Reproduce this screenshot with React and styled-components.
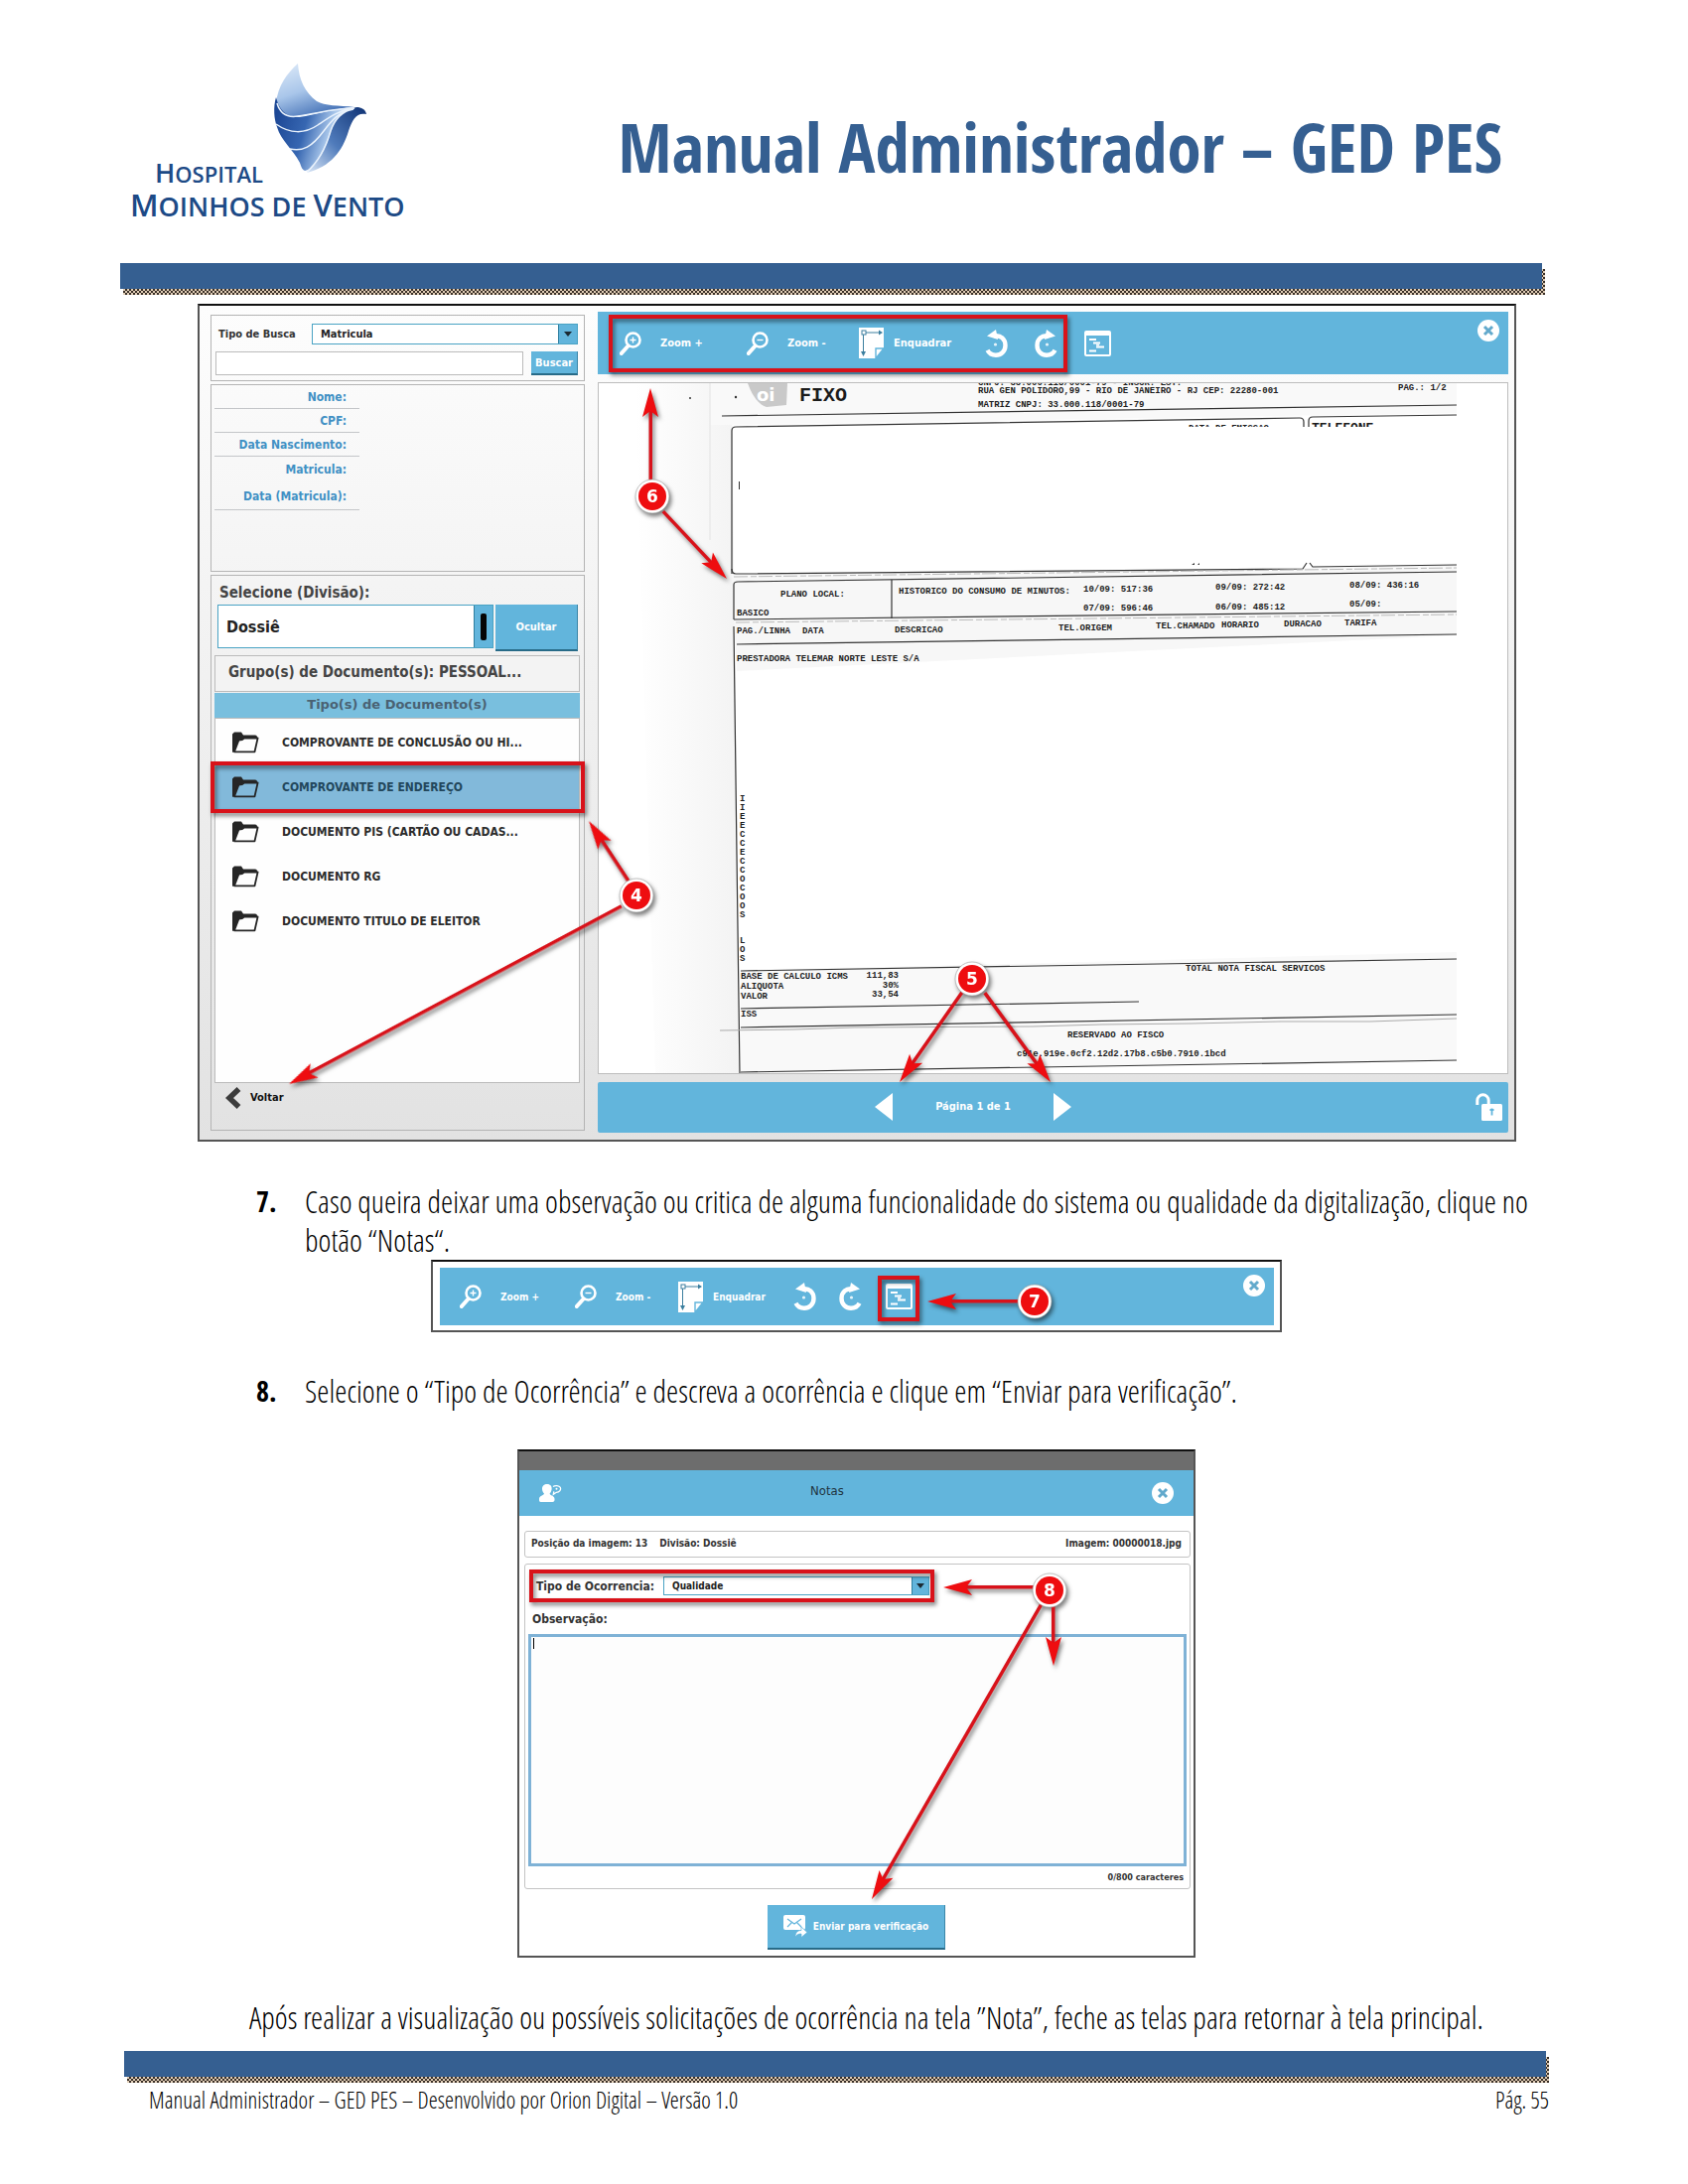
import React from "react";
import styled, { createGlobalStyle } from "styled-components";

const HEADING = '"Open Sans Condensed", "Open Sans", sans-serif';
const BODY = '"Open Sans Condensed Light", "Roboto Condensed", "Open Sans", sans-serif';
const UI = '"DejaVu Sans Condensed", "DejaVu Sans", sans-serif';
const UI_WIDE = '"DejaVu Sans", sans-serif';
const MONO = '"Liberation Mono", monospace';
const BLUE = "#62b5dc";
const NAVY = "#355f91";
const RED = "#d8121a";

const GlobalStyle = createGlobalStyle`
  *, *::before, *::after { box-sizing: border-box; }
  body { margin: 0; background: #fff; color: #000; font-family: ${BODY}; }
  button, input, select, textarea { font: inherit; color: inherit; margin: 0; padding: 0; border: 0; border-radius: 0; }
  button { background: none; cursor: pointer; }
  h1, h2, p, ol, ul, dl, dd, figure { margin: 0; padding: 0; }
  ol, ul { list-style: none; }
`;

const Page = styled.div`
  display: flex;
  flex-direction: column;
  padding: 0 140px 60px 121px;
`;

const Header = styled.header`
  display: flex;
  justify-content: space-between;
  height: 265px;
  padding: 62px 47px 0 10px;
`;

const Logo = styled.div`
  position: relative;
  width: 280px;
  height: 164px;
  padding-top: 96px;
  color: #1d4a86;
  font-family: "Open Sans", sans-serif;
  line-height: 31px;
`;

const LogoMark = styled.svg`
  position: absolute;
  left: 144px;
  top: 0;
`;

const LogoLine = styled.div`
  font-size: ${(p) => p.$size}px;
  padding-left: ${(p) => p.$indent}px;
  font-weight: 600;
  white-space: nowrap;
  & > b { font-size: ${(p) => p.$cap}px; font-weight: inherit; }
`;

const Title = styled.h1`
  padding-top: 42px;
  color: ${NAVY};
  font-family: ${HEADING};
  font-size: 69px;
  line-height: 86px;
  font-weight: 700;
  white-space: nowrap;
`;

const RuleWrap = styled.div`
  position: relative;
  margin-left: ${(p) => p.$start}px;
  margin-right: ${(p) => p.$end}px;
  padding: 0 3px 6px 0;
  &::before {
    content: "";
    position: absolute;
    inset: 6px 0 0 3px;
    background: repeating-conic-gradient(#3a3028 0 25%, #e0cdb6 0 50%) 0 0 / 4px 4px;
  }
`;

const RuleBar = styled.div`
  position: relative;
  height: 26px;
  background: ${NAVY};
`;

const Frame = styled.figure`
  position: relative;
  border: 2px solid #555;
  border-top-color: #111;
  background: #fff;
`;

const Overlay = styled.svg`
  position: absolute;
  inset: -2px;
  pointer-events: none;
  overflow: visible;
`;

const ViewerFrame = styled(Frame)`
  display: grid;
  grid-template-columns: 377px 1fr;
  column-gap: 13px;
  margin: 9px 33px 0 78px;
  padding: 6px 6px 7px 11px;
  background: linear-gradient(#fdfdfd, #e2e2e2);
  font-family: ${UI};
  font-weight: 700;
`;

const Column = styled.div`
  display: flex;
  flex-direction: column;
  gap: ${(p) => p.$gap}px;
  padding: ${(p) => p.$pad};
  min-width: 0;
`;

const Panel = styled.section`
  border: 1px solid #b4b4b4;
  padding: ${(p) => p.$pad || "0"};
  flex: ${(p) => (p.$grow ? "1" : "none")};
  display: flex;
  flex-direction: column;
`;

const SearchRow = styled.div`
  display: flex;
  align-items: center;
  gap: 8px;
  margin-top: ${(p) => p.$top || 0}px;
`;

const SearchLabel = styled.label`
  width: 89px;
  padding-left: 3px;
  color: #333;
  font-size: 11px;
  white-space: nowrap;
`;

const SelectBox = styled.div`
  position: relative;
  flex: 1;
  display: flex;
  height: ${(p) => p.$height}px;
  border: 1px solid #4aa3c4;
  background: #fff;
  & > select {
    flex: 1;
    appearance: none;
    background: transparent;
    outline: none;
    padding-left: 8px;
    color: #222;
    font-size: ${(p) => p.$size}px;
  }
`;

const SelectArrow = styled.span`
  display: grid;
  place-items: center;
  width: ${(p) => p.$width || 19}px;
  border-left: 1px solid #2f7fa0;
  background: ${BLUE};
`;

const Caret = styled.i`
  border: 4px solid transparent;
  border-top: 5px solid #1b2a33;
  border-bottom: 0;
`;

const ThickBar = styled.i`
  width: 6px;
  height: 27px;
  border-radius: 2px;
  background: #050505;
`;

const SearchInput = styled.input`
  flex: 1;
  min-width: 0;
  height: 24px;
  border: 1px solid #bbb;
  background: #fff;
`;

const BlueButton = styled.button`
  width: ${(p) => p.$width}px;
  height: ${(p) => p.$height}px;
  display: flex;
  align-items: center;
  justify-content: center;
  gap: 6px;
  border-right: 1px solid #3c87a8;
  border-bottom: 2px solid #286b88;
  background: ${BLUE};
  color: #fff;
  font-size: ${(p) => p.$size || 11}px;
  font-weight: 700;
  white-space: nowrap;
`;

const Fields = styled.dl`
  width: 149px;
  padding-left: 3px;
`;

const Field = styled.dt`
  height: ${(p) => p.$height}px;
  line-height: ${(p) => p.$height}px;
  padding-right: 13px;
  border-bottom: ${(p) => (p.$line ? "1px solid #c4c6c9" : "0")};
  color: #4090c4;
  font-size: 12px;
  text-align: right;
`;

const FieldPanel = styled(Panel)`
  height: 189px;
`;

const DivisionLabel = styled.label`
  display: block;
  padding: 0 5px;
  color: #444;
  font-size: 15px;
  line-height: 18px;
`;

const DivisionRow = styled.div`
  display: flex;
  gap: 2px;
  padding: 3px 2px 0 3px;
`;

const GroupBox = styled.div`
  height: 37px;
  margin-top: 4px;
  padding-left: 13px;
  border: 1px solid #bbb;
  color: #444;
  font-size: 15px;
  line-height: 32px;
  background: #f3f3f3;
  white-space: nowrap;
`;

const ListTitle = styled.h2`
  height: 25px;
  margin-top: 1px;
  background: #79bfde;
  color: #4a6273;
  font-family: ${UI_WIDE};
  font-size: 13px;
  line-height: 24px;
  text-align: center;
`;

const DocList = styled.ul`
  flex: 1;
  padding: 1px 0;
  border: 1px solid #bbb;
  background: #fefefe;
`;

const DocItem = styled.button`
  display: flex;
  align-items: center;
  gap: 23px;
  width: 100%;
  height: 45px;
  padding-left: 17px;
  background: ${(p) => (p.$active ? "#82b9da" : "transparent")};
  color: ${(p) => (p.$active ? "#22475c" : "#2c2c2c")};
  font-size: 12px;
  font-weight: 700;
  white-space: nowrap;
`;

const BackButton = styled.button`
  display: flex;
  align-items: center;
  gap: 9px;
  height: 47px;
  padding: 0 0 18px 11px;
  color: #111;
  font-size: 11px;
  font-weight: 700;
`;

const ToolGrid = styled.div`
  display: grid;
  grid-template-columns: ${(p) => p.$cols};
  align-items: center;
  height: ${(p) => p.$height}px;
  padding: 0 9px 0 ${(p) => p.$left}px;
  background: ${BLUE};
  color: #fff;
  font-family: ${UI};
  font-size: ${(p) => p.$size}px;
`;

const Tool = styled.button`
  display: flex;
  align-items: center;
  gap: ${(p) => p.$gap || 0}px;
  font-weight: 700;
  white-space: nowrap;
`;

const CloseTool = styled.button`
  align-self: start;
  justify-self: end;
  display: flex;
  margin-top: ${(p) => p.$top}px;
`;

const ScanBox = styled.div`
  height: 697px;
  border: 1px solid #bdbdbd;
  background: #fff;
  overflow: hidden;
  & > svg { display: block; width: 100%; height: 100%; }
`;

const Pager = styled.nav`
  display: grid;
  grid-template-columns: 279px 198px 1fr;
  align-items: center;
  height: 51px;
  padding: 0 6px 2px 0;
  border-radius: 2px;
  background: ${BLUE};
  color: #fff;
  font-size: 11px;
`;

const PagerCenter = styled.div`
  grid-column: 2;
  display: flex;
  align-items: center;
  justify-content: space-between;
  & > button { display: flex; }
`;

const LockButton = styled.button`
  justify-self: end;
  display: flex;
`;

const Step = styled.li`
  display: grid;
  grid-template-columns: 49px 1fr;
  margin-top: ${(p) => p.$top}px;
  padding-left: 137px;
  font-size: 31px;
  line-height: 39px;
  & > b { font-family: ${HEADING}; font-size: 28px; font-weight: 700; }
`;

const StripFrame = styled(Frame)`
  margin: 0 269px 0 313px;
  padding: 6px 6px 5px 7px;
  font-weight: 700;
`;

const NotesFrame = styled(Frame)`
  margin: 39px 356px 0 400px;
  height: 512px;
  font-family: ${UI};
  font-weight: 700;
  color: #333;
`;

const NotesShade = styled.div`
  height: 19px;
  background: #6d6d6d;
`;

const NotesHeader = styled.header`
  display: grid;
  grid-template-columns: 273px auto 1fr;
  align-items: center;
  height: 46px;
  padding: 0 20px 0 20px;
  background: ${BLUE};
  & > h2 { padding-bottom: 6px; font-size: 13px; font-weight: 400; color: #1f3440; }
  & > button { justify-self: end; display: flex; }
`;

const InfoBar = styled.div`
  display: flex;
  gap: 12px;
  height: 27px;
  margin: 15px 3px 0 5px;
  padding: 0 8px 0 6px;
  border: 1px solid #c4c4c4;
  border-radius: 3px;
  font-size: 10px;
  line-height: 23px;
  & > :last-child { margin-left: auto; }
`;

const NotesPanel = styled.form`
  margin: 6px 3px 0 5px;
  height: 328px;
  padding: 12px 3px 0 3px;
  border: 1px solid #c4c4c4;
  border-radius: 3px;
`;

const KindRow = styled.div`
  display: flex;
  align-items: center;
  width: 404px;
  padding-left: 8px;
  & > label { width: 128px; font-size: 12px; white-space: nowrap; }
`;

const ObsLabel = styled.label`
  display: block;
  margin: 15px 0 6px 4px;
  font-size: 12px;
  line-height: 18px;
`;

const ObsBox = styled.div`
  position: relative;
  & > textarea {
    display: block;
    width: 100%;
    height: 234px;
    border: 3px solid #7fb2d6;
    background: #fdfdfd;
    resize: none;
    outline: none;
    padding: 3px;
    font-size: 11px;
  }
`;

const TextCursor = styled.i`
  position: absolute;
  left: 5px;
  top: 4px;
  width: 1px;
  height: 11px;
  background: #000;
`;

const Counter = styled.p`
  padding-right: 3px;
  font-size: 9px;
  line-height: 22px;
  text-align: right;
`;

const SendRow = styled.div`
  display: flex;
  justify-content: center;
  margin-top: 16px;
`;

const Closing = styled.p`
  margin: 41px 0 14px 130px;
  font-size: 31px;
  line-height: 39px;
  white-space: nowrap;
`;

const Footer = styled.footer`
  display: flex;
  justify-content: space-between;
  padding: 3px 0 0 29px;
  font-size: 23px;
  line-height: 28px;
`;

/* ---------- icons ---------- */

const Magnifier = ({ minus }) => (
  <svg width="22" height="24" viewBox="0 0 22 24" fill="none" stroke="#fff">
    <circle cx="13.5" cy="8.5" r="7" strokeWidth="2.6" />
    <path d="M8.5 14.5 1.8 22" strokeWidth="4" strokeLinecap="round" />
    <path d={minus ? "M10.5 8.5h6" : "M10.5 8.5h6M13.5 5.5v6"} strokeWidth="1.4" />
  </svg>
);

const FitPage = () => (
  <svg width="25" height="31" viewBox="0 0 25 31">
    <path d="M0 0h25v20l-8 11H0z" fill="#fff" />
    <path d="M17 31v-10h8z" fill="#fff" stroke="#62b5dc" strokeWidth="1.4" />
    <path d="M7 5h14M4.500 7v18" stroke="#3c7f9f" strokeWidth="1" />
    <path d="M20 2.500 24 5l-4 2.500zM2 24l2.500 5 2.500-5z" fill="#3c7f9f" />
    <rect x="3" y="3" width="4" height="4" fill="#fff" stroke="#3c7f9f" />
  </svg>
);

const Rotate = ({ right }) => (
  <svg width="23" height="28" viewBox="0 0 23 28">
    <g transform={right ? "translate(23 0) scale(-1 1)" : undefined}>
      <path d="M9 6.500C16 5 20.500 10 20.500 16c0 6-4.500 9.700-9.500 9.700-4 0-7-2-8.500-5" fill="none" stroke="#fff" strokeWidth="4.400" />
      <path d="M2 6.500 11 0l2 10z" fill="#fff" />
      <circle cx="10.500" cy="15" r="1.600" fill="#fff" opacity=".85" />
    </g>
  </svg>
);

const NotesIcon = () => (
  <svg width="27" height="26" viewBox="0 0 27 26" fill="none" stroke="#fff">
    <rect x="1" y="1" width="25" height="24" rx="1" strokeWidth="2" />
    <path d="M1 3h25" strokeWidth="4" />
    <path d="M5 9h7M9 12.500h7M12 16.500h8M5 20.500h7" strokeWidth="2" />
    <path d="M12 14.500h3" strokeWidth="1.500" />
  </svg>
);

const CloseIcon = () => (
  <svg width="22" height="22" viewBox="0 0 22 22">
    <circle cx="11" cy="11" r="11" fill="#fff" />
    <path d="m7 7 8 8m0-8-8 8" stroke="#62a9cc" strokeWidth="3" />
  </svg>
);

const Folder = ({ fill }) => (
  <svg width="27" height="22" viewBox="0 0 27 22">
    <path d="M0 21V2.500L2 .500h7l2 3h12q2 0 2 2v3z" fill="#262626" />
    <path d="M2 20.300 6.500 8.500 10 8l2-1.500h13.600L22.500 20.300z" fill={fill} stroke="#262626" strokeWidth="1.800" strokeLinejoin="round" />
  </svg>
);

const BackChevron = () => (
  <svg width="16" height="22" viewBox="0 0 16 22" fill="none" stroke="#3c3c3c" strokeWidth="5.500">
    <path d="M13.500 2 4 11l9.500 9" />
  </svg>
);

const Triangle = ({ right }) => (
  <svg width="18" height="28" viewBox="0 0 18 28">
    <path d={right ? "M0 0 18 14 0 28z" : "M18 0 0 14l18 14z"} fill="#fff" />
  </svg>
);

const OpenLock = () => (
  <svg width="27" height="28" viewBox="0 0 27 28">
    <path d="M1.800 12V7.500a5.700 5.700 0 0 1 11.400 0V11" fill="none" stroke="#fff" strokeWidth="3" />
    <rect x="6" y="11" width="21" height="17" rx="1.500" fill="#fff" />
    <path d="M14.500 17h4M16.500 15.500v7" stroke="#62b5dc" strokeWidth="1.800" />
  </svg>
);

const UserTalk = () => (
  <svg width="23" height="18" viewBox="0 0 23 18">
    <path d="M8 0c3.500 0 5 2.300 4.600 5.200-.3 2-1 3.300-2 4.200.3 2 4.900 2 4.900 5.400V16c0 1-1 2-2 2h-12c-1 0-1.500-1-1.500-2v-1.200c0-3.400 4.500-3.400 5-5.400C3.700 8.300 3 6.700 3 4.800 3 2 5 0 8 0z" fill="#fff" />
    <path d="M14 2.500c2-1.500 6-1.200 7.300.8 1.200 2.300-.8 5-4 5l-3 2 .5-3" fill="none" stroke="#fff" strokeWidth="1.300" />
    <circle cx="17.500" cy="4.800" r="1" fill="#fff" />
  </svg>
);

const MailSend = () => (
  <svg width="24" height="23" viewBox="0 0 24 23">
    <rect x="0" y="0" width="22" height="15" rx="2" fill="#fff" />
    <path d="m4 4 7 5 7-5M4 12l4.500-4.500M18 12l-4.500-4.500" fill="none" stroke="#62b5dc" strokeWidth="1.200" />
    <path d="M12 22c0-5 3-6.500 6-6.500V12l6 5.500-6 5V19c-2.500 0-4.500.5-6 3z" fill="#fff" stroke="#62b5dc" strokeWidth=".7" />
  </svg>
);

const Wing = () => (
  <LogoMark width="96" height="114" viewBox="0 0 96 114" role="img" aria-label="Hospital Moinhos de Vento">
    <defs>
      <linearGradient id="wingTop" x1=".1" y1="0" x2=".6" y2="1">
        <stop offset="0" stopColor="#dce9f8" />
        <stop offset=".5" stopColor="#a9c6ea" />
        <stop offset="1" stopColor="#3f6db4" />
      </linearGradient>
      <linearGradient id="wingMid" x1="0" y1=".3" x2=".8" y2=".5">
        <stop offset="0" stopColor="#1c4795" />
        <stop offset=".45" stopColor="#3767b2" />
        <stop offset=".8" stopColor="#a8c6ea" />
        <stop offset="1" stopColor="#e4eefa" />
      </linearGradient>
      <linearGradient id="wingTail" x1="1" y1="0" x2="0" y2="1">
        <stop offset="0" stopColor="#0f3274" />
        <stop offset=".55" stopColor="#4f7bbb" />
        <stop offset="1" stopColor="#dbe8f8" />
      </linearGradient>
    </defs>
    <path d="M25 2C14 12 5 24 3 42c3 10 9 15 21 13 21-3 40-8 58-9-16-2-30-1-38-6C32 31 26 18 25 2z" fill="url(#wingTop)" />
    <path d="M3 36c-3 10-2 22 1 30 4 14 16 22 23 36 2 6 3 7 5 8 18-4 28-40 56-64-26 0-44 8-62 10C12 56 6 48 3 36z" fill="url(#wingMid)" />
    <path d="M84 46c5 0 9 2 10 7-10-2-14 5-18 17-6 20-18 36-42 42 14-12 20-28 24-42 4-12 12-21 26-24z" fill="url(#wingTail)" />
    <path d="M4 42c3 10 9 15 21 13 20-3 38-8 55-8M3 63c14 10 29 10 42 1 12-8 20-14 35-17M17 88c13 3 22-2 34-18 9-12 15-19 30-22M34 111c14-12 20-27 24-41 4-12 12-20 24-23" fill="none" stroke="#e9f2fc" strokeWidth="1.500" />
  </LogoMark>
);

/* ---------- callouts ---------- */

const Arrow = ({ from, to }) => {
  const dx = to[0] - from[0];
  const dy = to[1] - from[1];
  const len = Math.hypot(dx, dy);
  const angle = (Math.atan2(dy, dx) * 180) / Math.PI;
  return (
    <g transform={`translate(${from[0]} ${from[1]}) rotate(${angle})`} fill="#ee0d10">
      <rect x="0" y="-1.500" width={len - 22} height="3.500" fill={RED} />
      <path d={`M${len} 0 ${len - 29} -8 ${len - 23} 0 ${len - 29} 8z`} />
    </g>
  );
};

const Badge = ({ x, y, n }) => (
  <g>
    <circle cx={x} cy={y} r="17" fill="#fff" stroke="#999" strokeWidth=".6" />
    <circle cx={x} cy={y} r="14" fill="#ee0d10" />
    <text x={x} y={y + 6} textAnchor="middle" fontFamily='"DejaVu Sans", sans-serif' fontWeight="700" fontSize="17" fill="#fff">
      {n}
    </text>
  </g>
);

const Callouts = ({ box, boxes, arrows, badge }) => (
  <Overlay viewBox={box.join(" ")} width={box[2]} height={box[3]}>
    <g style={{ filter: "drop-shadow(2px 3px 2px rgba(0,0,0,.5))" }}>
      {boxes.map(([x, y, w, h]) => (
        <rect key={x} x={x + 2} y={y + 2} width={w - 4} height={h - 4} fill="none" stroke={RED} strokeWidth="4" />
      ))}
      {arrows.map((a, i) => (
        <Arrow key={i} from={a[0]} to={a[1]} />
      ))}
      {badge.map(([x, y, n]) => (
        <Badge key={n} x={x} y={y} n={n} />
      ))}
    </g>
  </Overlay>
);

/* ---------- scanned bill ---------- */

const SCAN_LINES = [
  "M727 418 1467 407",
  "M737 577V433q0-4 4-4L1309 420q4 0 4 4v5",
  "M1318 429v-6q0-4 4-4L1467 417",
  "M737 572q0 5 4 5L1312 572l4-6M1319 566l3 4L1467 568",
  "M739 623V588q0-3 4-3L1467 575",
  "M898 583v39",
  "M739 623 1467 615",
  "M742 648 1467 638",
  "M739 630 742 860 745 1081",
  "M746 977 1467 965",
  "M746 1015 1147 1008",
  "M746 1034 1467 1021",
  "M746 1079 1467 1067",
];

const SCAN_TEXT = [
  [985, 395, "RUA GEN POLIDORO,99 - RIO DE JANEIRO - RJ CEP: 22280-001"],
  [985, 409, "MATRIZ CNPJ: 33.000.118/0001-79"],
  [1408, 392, "PAG.: 1/2"],
  [786, 600, "PLANO LOCAL:"],
  [742, 619, "BASICO"],
  [905, 597, "HISTORICO DO CONSUMO DE MINUTOS:"],
  [1091, 595, "10/09: 517:36"],
  [1091, 614, "07/09: 596:46"],
  [1224, 593, "09/09: 272:42"],
  [1224, 613, "06/09: 485:12"],
  [1359, 591, "08/09: 436:16"],
  [1359, 610, "05/09:"],
  [742, 637, "PAG./LINHA"],
  [808, 637, "DATA"],
  [901, 636, "DESCRICAO"],
  [1066, 634, "TEL.ORIGEM"],
  [1164, 632, "TEL.CHAMADO"],
  [1230, 631, "HORARIO"],
  [1293, 630, "DURACAO"],
  [1354, 629, "TARIFA"],
  [742, 665, "PRESTADORA TELEMAR NORTE LESTE S/A"],
  [746, 985, "BASE DE CALCULO ICMS"],
  [746, 995, "ALIQUOTA"],
  [746, 1005, "VALOR"],
  [746, 1023, "ISS"],
  [1194, 977, "TOTAL NOTA FISCAL SERVICOS"],
  [1075, 1044, "RESERVADO AO FISCO"],
  [1024, 1063, "c91e.919e.0cf2.12d2.17b8.c5b0.7910.1bcd"],
];

const SCAN_AMOUNTS = [
  [984, "111,83"],
  [994, "30%"],
  [1003, "33,54"],
];

const SIDE_LETTERS = "IIEECCECCOCOOS";

const Scan = () => (
  <svg viewBox="603 385 915 695" preserveAspectRatio="xMinYMin meet">
    <defs>
      <linearGradient id="paper" x1="0" x2="1" y1="0" y2="0">
        <stop offset="0" stopColor="#fff" />
        <stop offset="1" stopColor="#f3f3f3" />
      </linearGradient>
      <clipPath id="aboveCover"><rect x="603" y="385" width="915" height="44" /></clipPath>
    </defs>
    <path d="M640 385h97l8 696H660z" fill="url(#paper)" />
    <path d="M715 385h752v30l-730 12H715z" fill="#f9f9f9" />
    <path d="M737 578 1467 569v70L1200 652 742 675z" fill="#f7f7f7" />
    <path d="M746 977 1467 958v108L746 1080z" fill="#f9f9f9" />
    <path d="M715 385v158" stroke="#e2e2e2" />
    <path d="M753 385h40l-1 22-20 2q-12-4-19-24z" fill="#c9c9c9" />
    <text x="762" y="403" fontFamily='"DejaVu Sans", sans-serif' fontWeight="700" fontSize="18" fill="#fff">oi</text>
    <g fill="none" stroke="#333" strokeWidth="1.200">
      {SCAN_LINES.map((d) => (
        <path key={d} d={d} />
      ))}
    </g>
    <path d="M725 1037 800 1036 860 1034 1040 1033 1110 1031 1200 1030 1290 1028 1380 1028 1467 1025" fill="none" stroke="#aaa" />
    <path d="M739 580 1467 571M741 626 1467 618" stroke="#bbb" strokeDasharray="14 3 6 2" />
    <g fill="#333">
      <circle cx="695" cy="400" r="1" />
      <circle cx="741" cy="399" r="1.200" />
      <path d="M744 484h1v8h-1zM1200 568h3v-2zM1206 568h2v-2z" />
    </g>
    <g fontFamily={MONO} fill="#1c1c1c">
      <text x="805" y="403" fontSize="20">FIXO</text>
      <g fontSize="9" fontWeight="700">
        <text x="985" y="387">CNPJ: 33.000.118/0001-79 - INSCR. EST.</text>
        {SCAN_TEXT.map(([x, y, t]) => (
          <text key={t} x={x} y={y}>{t}</text>
        ))}
        {SCAN_AMOUNTS.map(([y, t]) => (
          <text key={t} x="905" y={y} textAnchor="end">{t}</text>
        ))}
        {SIDE_LETTERS.split("").map((c, i) => (
          <text key={i} x="745" y={806 + i * 9}>{c}</text>
        ))}
        {["L", "O", "S"].map((c, i) => (
          <text key={c} x="745" y={949 + i * 9}>{c}</text>
        ))}
      </g>
      <g clipPath="url(#aboveCover)" fontWeight="700">
        <text x="1197" y="433" fontSize="9">DATA DE EMISSAO</text>
        <text x="1321" y="434" fontSize="13">TELEFONE</text>
      </g>
    </g>
  </svg>
);

/* ---------- toolbar ---------- */

const ToolBar = ({ cols, height, left, closeTop, size }) => (
  <ToolGrid $cols={cols} $height={height} $left={left} $size={size}>
    <Tool $gap={19}><Magnifier />Zoom +</Tool>
    <Tool $gap={19}><Magnifier minus />Zoom -</Tool>
    <Tool $gap={10}><FitPage />Enquadrar</Tool>
    <Tool aria-label="Girar à esquerda"><Rotate /></Tool>
    <Tool aria-label="Girar à direita"><Rotate right /></Tool>
    <Tool aria-label="Notas"><NotesIcon /></Tool>
    <CloseTool aria-label="Fechar" $top={closeTop}><CloseIcon /></CloseTool>
  </ToolGrid>
);

const DOCS = [
  "COMPROVANTE DE CONCLUSÃO OU HI...",
  "COMPROVANTE DE ENDEREÇO",
  "DOCUMENTO PIS (CARTÃO OU CADAS...",
  "DOCUMENTO RG",
  "DOCUMENTO TITULO DE ELEITOR",
];

const FIELDS = [
  ["Nome:", 24, true],
  ["CPF:", 24, true],
  ["Data Nascimento:", 24, true],
  ["Matricula:", 26, false],
  ["Data (Matricula):", 28, true],
];

const Rule = ({ start = 0, end = 0 }) => (
  <RuleWrap $start={start} $end={end}><RuleBar /></RuleWrap>
);

export default function App() {
  return (
    <Page>
      <GlobalStyle />
      <Header>
        <Logo>
          <Wing />
          <LogoLine $size={22} $cap={27} $indent={25}><b>H</b>OSPITAL</LogoLine>
          <LogoLine $size={27} $cap={31} $indent={0}><b>M</b>OINHOS DE <b>V</b>ENTO</LogoLine>
        </Logo>
        <Title>Manual Administrador – GED PES</Title>
      </Header>
      <Rule end={4} />

      <ViewerFrame>
        <Column $gap={3} $pad="3px 0 2px">
          <Panel $pad="8px 6px 5px 4px">
            <SearchRow>
              <SearchLabel htmlFor="tipo-busca">Tipo de Busca</SearchLabel>
              <SelectBox $height={21} $size={11}>
                <select id="tipo-busca"><option>Matricula</option></select>
                <SelectArrow><Caret /></SelectArrow>
              </SelectBox>
            </SearchRow>
            <SearchRow $top={7}>
              <SearchInput aria-label="Valor da busca" />
              <BlueButton $width={47} $height={24}>Buscar</BlueButton>
            </SearchRow>
          </Panel>
          <FieldPanel>
            <Fields>
              {FIELDS.map(([label, h, line]) => (
                <Field key={label} $height={h} $line={line}>{label}</Field>
              ))}
            </Fields>
          </FieldPanel>
          <Panel $grow $pad="8px 4px 0 3px">
            <DivisionLabel htmlFor="divisao">Selecione (Divisão):</DivisionLabel>
            <DivisionRow>
              <SelectBox $height={44} $size={16}>
                <select id="divisao"><option>Dossiê</option></select>
                <SelectArrow><ThickBar /></SelectArrow>
              </SelectBox>
              <BlueButton $width={83} $height={47}>Ocultar</BlueButton>
            </DivisionRow>
            <GroupBox>Grupo(s) de Documento(s): PESSOAL...</GroupBox>
            <ListTitle>Tipo(s) de Documento(s)</ListTitle>
            <DocList>
              {DOCS.map((name, i) => (
                <li key={name}>
                  <DocItem $active={i === 1}>
                    <Folder fill={i === 1 ? "#82b9da" : "#fefefe"} />
                    {name}
                  </DocItem>
                </li>
              ))}
            </DocList>
            <BackButton><BackChevron />Voltar</BackButton>
          </Panel>
        </Column>
        <Column $gap={8} $pad="0">
          <ToolBar cols="128px 113px 127px 50px 50px 27px 1fr" height={63} left={22} closeTop={8} size={11} />
          <ScanBox><Scan /></ScanBox>
          <Pager>
            <PagerCenter>
              <button aria-label="Página anterior"><Triangle /></button>
              Página 1 de 1
              <button aria-label="Próxima página"><Triangle right /></button>
            </PagerCenter>
            <LockButton aria-label="Desbloquear"><OpenLock /></LockButton>
          </Pager>
        </Column>
        <Callouts
          box={[199, 306, 1328, 843]}
          boxes={[[212, 767, 377, 52], [613, 317, 462, 58]]}
          arrows={[
            [[655, 484], [655, 391]],
            [[668, 515], [732, 583]],
            [[633, 888], [593, 827]],
            [[626, 913], [291, 1092]],
            [[969, 1000], [906, 1090]],
            [[992, 1000], [1058, 1090]],
          ]}
          badge={[[657, 500, 6], [641, 902, 4], [979, 986, 5]]}
        />
      </ViewerFrame>

      <ol>
        <Step $top={41}>
          <b>7.</b>
          <span>
            Caso queira deixar uma observação ou critica de alguma funcionalidade do sistema ou qualidade da digitalização, clique no
            botão “Notas“.
          </span>
        </Step>
      </ol>
      <StripFrame>
        <ToolBar cols="116px 104px 116px 46px 47px 27px 1fr" height={58} left={20} closeTop={7} size={10} />
        <Callouts
          box={[434, 1268, 857, 73]}
          boxes={[[884, 1284, 42, 46]]}
          arrows={[[[1028, 1310], [934, 1310]]]}
          badge={[[1042, 1310, 7]]}
        />
      </StripFrame>
      <ol start="8">
        <Step $top={40}>
          <b>8.</b>
          <span>Selecione o “Tipo de Ocorrência” e descreva a ocorrência e clique em “Enviar para verificação”.</span>
        </Step>
      </ol>

      <NotesFrame>
        <NotesShade />
        <NotesHeader>
          <UserTalk />
          <h2>Notas</h2>
          <button aria-label="Fechar notas"><CloseIcon /></button>
        </NotesHeader>
        <InfoBar>
          <span>Posição da imagem: 13</span>
          <span>Divisão: Dossiê</span>
          <span>Imagem: 00000018.jpg</span>
        </InfoBar>
        <NotesPanel>
          <KindRow>
            <label htmlFor="tipo-ocorrencia">Tipo de Ocorrencia:</label>
            <SelectBox $height={19} $size={10}>
              <select id="tipo-ocorrencia"><option>Qualidade</option></select>
              <SelectArrow $width={17}><Caret /></SelectArrow>
            </SelectBox>
          </KindRow>
          <ObsLabel htmlFor="observacao">Observação:</ObsLabel>
          <ObsBox>
            <textarea id="observacao" />
            <TextCursor />
          </ObsBox>
          <Counter>0/800 caracteres</Counter>
        </NotesPanel>
        <SendRow>
          <BlueButton $width={179} $height={45} $size={10}><MailSend />Enviar para verificação</BlueButton>
        </SendRow>
        <Callouts
          box={[521, 1460, 683, 512]}
          boxes={[[533, 1581, 408, 33]]}
          arrows={[
            [[1042, 1599], [950, 1599]],
            [[1061, 1616], [1061, 1678]],
            [[1049, 1616], [878, 1913]],
          ]}
          badge={[[1057, 1602, 8]]}
        />
      </NotesFrame>

      <Closing>
        Após realizar a visualização ou possíveis solicitações de ocorrência na tela ”Nota”, feche as telas para retornar à tela principal.
      </Closing>
      <Rule start={4} />
      <Footer>
        <span>Manual Administrador – GED PES – Desenvolvido por Orion Digital – Versão 1.0</span>
        <span>Pág. 55</span>
      </Footer>
    </Page>
  );
}
